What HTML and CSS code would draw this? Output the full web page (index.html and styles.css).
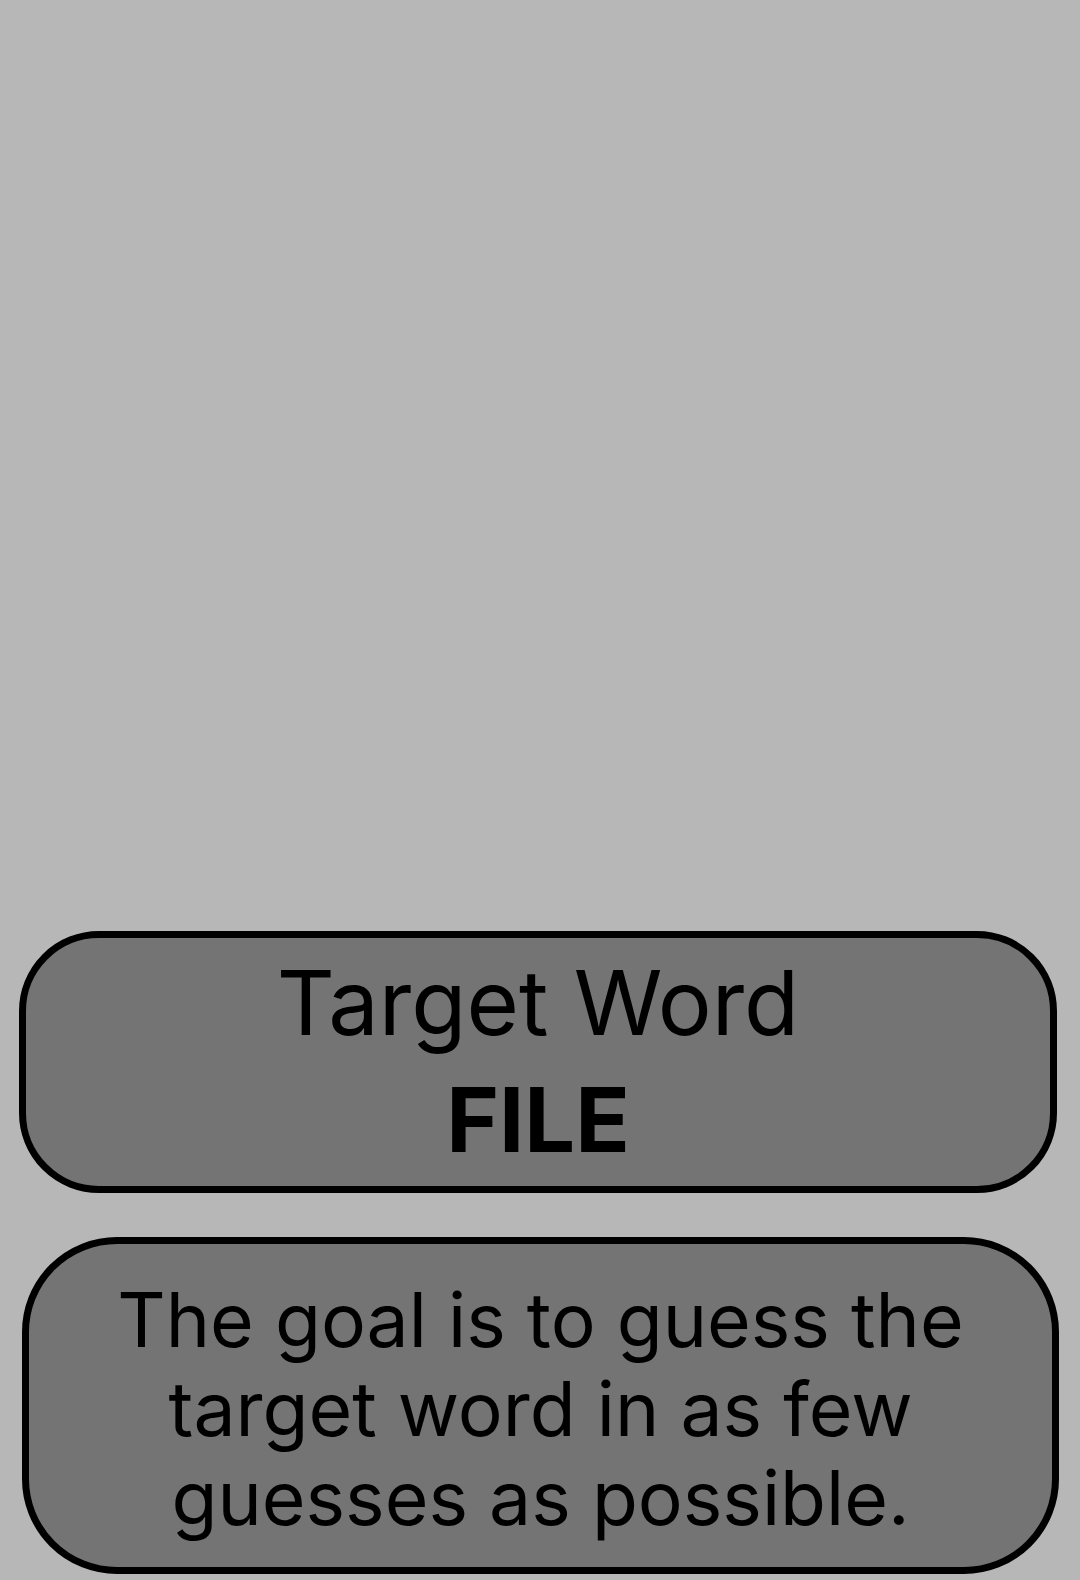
FILE: index.html
```html
<!DOCTYPE html>
<html lang="en">
<head>
<meta charset="utf-8">
<title>Target Word</title>
<link rel="stylesheet" href="styles.css">
</head>
<body>
<main class="screen">
  <section class="card card-target">
    <div class="target-label">Target Word</div>
    <div class="target-word">FILE</div>
  </section>
  <section class="card card-goal">
    <p class="goal-text">The goal is to guess the target word in as few guesses as possible.</p>
  </section>
</main>
</body>
</html>
```

FILE: styles.css
```css
html, body {
  margin: 0;
  padding: 0;
  background: #b7b7b7;
}

body {
  font-family: Inter, "Noto Sans", "Liberation Sans", sans-serif;
  color: #000;
}

.screen {
  width: 1080px;
  height: 1580px;
  display: flex;
  flex-direction: column;
  justify-content: flex-end;
  gap: 44px;
  padding-bottom: 6px;
  box-sizing: border-box;
}

.card {
  background: #747474;
  border: 7px solid #000;
  box-sizing: border-box;
  text-align: center;
}

.card-target {
  margin: 0 23px 0 19px;
  height: 262px;
  border-radius: 80px;
  padding: 10px 20px 0;
  display: flex;
  flex-direction: column;
  gap: 8px;
}

.target-label {
  font-size: 90px;
  font-weight: 400;
  line-height: normal;
}

.target-word {
  font-size: 90px;
  font-weight: 700;
  line-height: normal;
}

.card-goal {
  margin: 0 21px 0 22px;
  height: 337px;
  border-radius: 95px;
  padding: 31px 60px 0;
}

.goal-text {
  margin: 0;
  font-size: 75px;
  line-height: 89px;
  font-weight: 400;
}
```
